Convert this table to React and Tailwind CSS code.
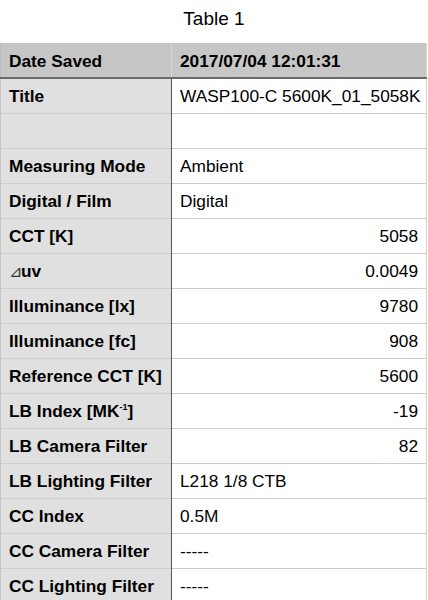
import React from 'react';

const rows = [
  { label: 'Title', value: 'WASP100-C 5600K_01_5058K' },
  { label: '', value: '' },
  { label: 'Measuring Mode', value: 'Ambient' },
  { label: 'Digital / Film', value: 'Digital' },
  { label: 'CCT [K]', value: '5058', right: true },
  { label: 'duv', value: '0.0049', right: true },
  { label: 'Illuminance [lx]', value: '9780', right: true },
  { label: 'Illuminance [fc]', value: '908', right: true },
  { label: 'Reference CCT [K]', value: '5600', right: true },
  { label: 'lbindex', value: '-19', right: true },
  { label: 'LB Camera Filter', value: '82', right: true },
  { label: 'LB Lighting Filter', value: 'L218 1/8 CTB' },
  { label: 'CC Index', value: '0.5M' },
  { label: 'CC Camera Filter', value: '-----' },
  { label: 'CC Lighting Filter', value: '-----' },
];

const Label = ({ label }) => {
  if (label === 'duv') {
    return (
      <span>
        <span className="font-normal text-[16px] text-[#333] mr-[-1px]">⊿</span>uv
      </span>
    );
  }
  if (label === 'lbindex') {
    return (
      <span>
        LB Index [MK<sup className="text-[9px] -top-[7px]">-1</sup>]
      </span>
    );
  }
  return label;
};

const App = () => {
  return (
    <div className="w-[428px] h-[600px] overflow-hidden bg-white text-black font-['Liberation_Sans',Arial,sans-serif]">
      <div className="h-[43px] flex items-center justify-center text-[19px] pb-[4px]">Table 1</div>
      <table className="w-[427px] border-collapse table-fixed text-[17.3px]">
        <colgroup>
          <col className="w-[171px]" />
          <col />
        </colgroup>
        <thead>
          <tr className="h-[35px] bg-[#c6c6c6] border-b-2 border-b-[#6b6b6b]">
            <th className="text-left font-bold pl-[8px] pt-[3px] border-l border-l-[#bdbdbd] border-r border-r-[#d6d6d6]">Date Saved</th>
            <th className="text-left font-bold pl-[8px] pt-[3px] border-r border-r-[#d9d9d9]">2017/07/04 12:01:31</th>
          </tr>
        </thead>
        <tbody>
          {rows.map((r, i) => (
            <tr key={i} className="h-[35px] border-b border-b-[#cdcdcd]">
              <td className="bg-[#e0e0e0] font-bold pl-[8px] pt-[2px] border-l border-l-[#c4c4c4] border-r border-r-[#555] whitespace-nowrap">
                <Label label={r.label} />
              </td>
              <td className={`pl-[8px] pr-[8px] pt-[2px] border-r border-r-[#d3d3d3] whitespace-nowrap ${r.right ? 'text-right' : 'text-left'}`}>
                {r.value}
              </td>
            </tr>
          ))}
        </tbody>
      </table>
    </div>
  );
};

export default App;
